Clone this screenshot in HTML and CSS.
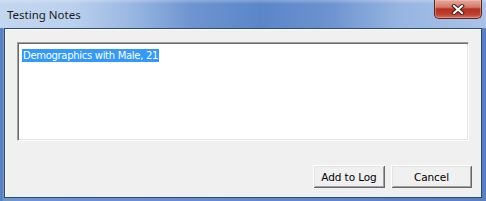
FILE: index.html
```html
<!DOCTYPE html>
<html lang="en">
<head>
    <meta charset="UTF-8">
    <title>Testing Notes</title>
    <link rel="stylesheet" href="styles.css">
</head>
<body>
    <div class="window">
        <div class="title-bar">
            <span class="title-text">Testing Notes</span>
            <div class="close-button">
                <svg width="14" height="11" viewBox="0 0 14 11">
                    <path d="M3 2 L11 9 M11 2 L3 9" stroke="#3b1e1a" stroke-width="4" stroke-linecap="square"/>
                    <path d="M3 2 L11 9 M11 2 L3 9" stroke="#ffffff" stroke-width="2" stroke-linecap="square"/>
                </svg>
            </div>
        </div>

        <div class="client">
            <div class="notes-box">
                <span class="selected-text">Demographics with Male, 21</span>
            </div>

            <div class="button-row">
                <button class="btn btn-add">Add to Log</button>
                <button class="btn btn-cancel">Cancel</button>
            </div>
        </div>
    </div>
</body>
</html>
```

FILE: styles.css
```css
body {
    margin: 0;
    padding: 0;
    width: 486px;
    height: 201px;
    overflow: hidden;
    font-family: 'Liberation Sans', Arial, sans-serif;
}

.window {
    width: 486px;
    height: 201px;
    display: flex;
    flex-direction: column;
    background: linear-gradient(to right, #5d87c6 0, #4f7bbf 2px, #6e95d0 3px, #5580c2 100%);
}

.title-bar {
    position: relative;
    height: 28px;
    display: flex;
    align-items: center;
    padding-left: 7px;
    background:
        linear-gradient(to bottom, rgba(255, 255, 255, 0.25) 0, rgba(255, 255, 255, 0) 4px),
        linear-gradient(to right, #c3d6ef 0, #bcd1ee 70px, #9ab8e3 130px, #6f95d1 190px, #5a86c8 260px, #6d93d0 330px, #97b5e1 400px, #a9c3e8 486px);
}

.title-text {
    font-family: 'Noto Sans', 'Open Sans', sans-serif;
    font-size: 11.5px;
    color: #1b1b1b;
    margin-top: 1px;
}

.close-button {
    position: absolute;
    left: 434px;
    top: 0;
    width: 46px;
    height: 18px;
    border: 1px solid #5a2520;
    border-top: none;
    border-radius: 0 0 5px 5px;
    display: flex;
    align-items: center;
    justify-content: center;
    background: linear-gradient(to bottom, #e6aa9f 0, #d27a6c 40%, #b5301f 50%, #c0402f 80%, #d6705f 100%);
    box-shadow: inset 0 0 0 1px rgba(255, 200, 190, 0.4);
}

.client {
    flex: 1;
    margin: 0 4px 3px 4px;
    border: 1px solid #2d4a75;
    background-color: #f0f0f0;
    box-shadow: inset 0 1px 0 #ffffff, inset 1px 0 0 #fafafa;
    display: flex;
    flex-direction: column;
}

.notes-box {
    margin: 13px 12px 0 12px;
    height: 93px;
    padding: 2px 3px;
    background-color: white;
    border-top: 1px solid #a0a0a0;
    border-left: 1px solid #a0a0a0;
    border-right: 1px solid #ffffff;
    border-bottom: 1px solid #ffffff;
    box-shadow: inset 1px 1px 0 #696969, inset -1px -1px 0 #e3e3e3;
}

.selected-text {
    display: inline-block;
    margin-left: 1px;
    padding: 0 1px;
    height: 13px;
    line-height: 13px;
    font-family: Tahoma, 'DejaVu Sans', sans-serif;
    font-size: 10px;
    letter-spacing: -0.3px;
    color: white;
    background-color: #3399ff;
}

.button-row {
    display: flex;
    justify-content: flex-end;
    gap: 6px;
    margin-top: 24px;
    padding-right: 9px;
}

.btn {
    height: 23px;
    padding: 0;
    border: none;
    background-color: #f0f0f0;
    font-family: Tahoma, 'DejaVu Sans', sans-serif;
    font-size: 10.5px;
    letter-spacing: -0.1px;
    color: #000;
    box-shadow:
        inset 1px 1px 0 #ffffff,
        inset -1px -1px 0 #696969,
        inset 2px 2px 0 #e3e3e3,
        inset -2px -2px 0 #a0a0a0;
}

.btn-add {
    width: 72px;
}

.btn-cancel {
    width: 81px;
}
```
